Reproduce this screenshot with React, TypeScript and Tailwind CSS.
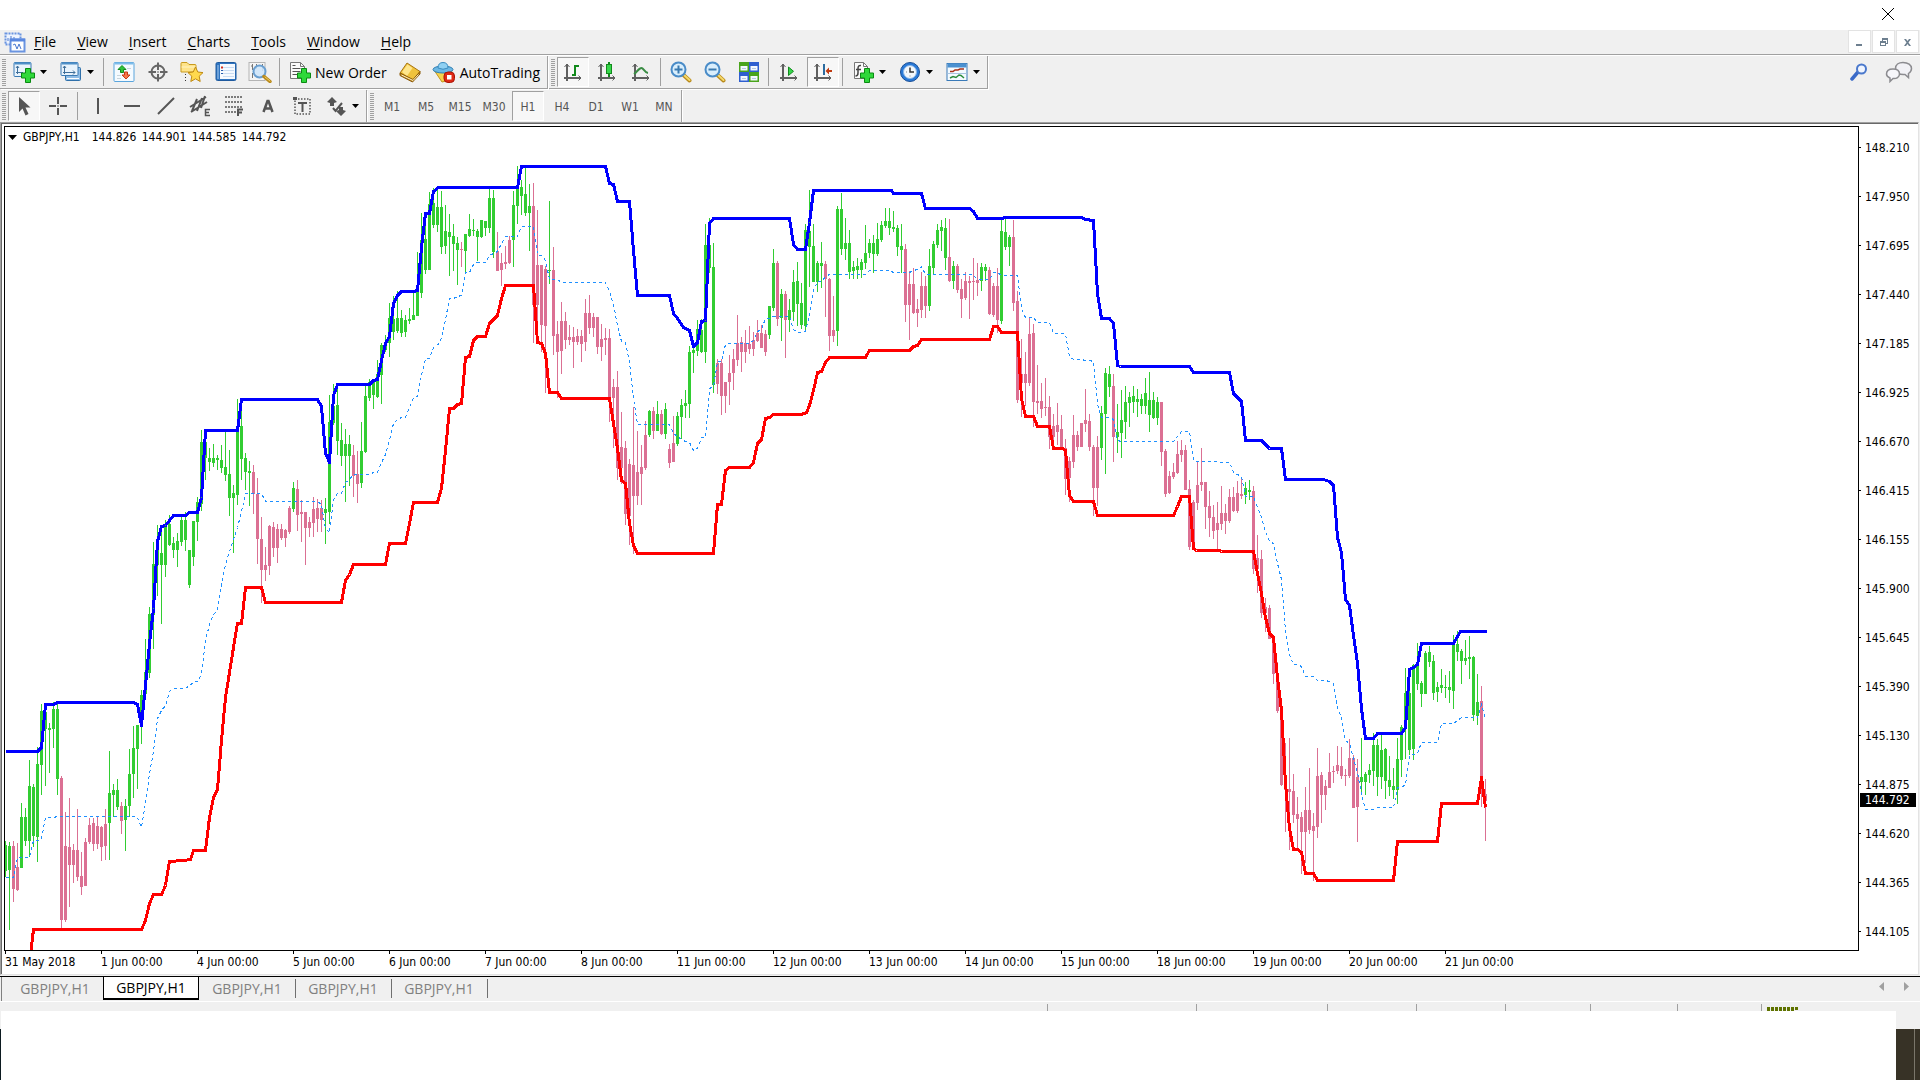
import React, { FC, ReactNode, memo } from "react";

// candle = colour + high.bodyTop.bodyBottom.low, one every 4px
const CANDLES = `
g841.845.871.877 g842.846.870.930 p841.846.889.902 p843.867.890.891 g803.817.868.868 g808.817.841.846 g760.786.841.857 g784.787.836.847
g747.764.837.862 g704.711.765.795 g705.712.729.786 g723.728.730.773 g702.709.729.748 g703.709.779.795 p776.778.920.928 p812.846.920.922
p798.847.865.907 p844.850.865.883 p809.850.877.881 p852.876.887.895 p838.842.886.886 p818.825.842.844 p818.823.844.851 p817.826.844.849
p826.827.847.861 p809.824.846.860 g751.793.823.860 g784.790.795.817 g779.790.807.810 p802.806.821.834 g799.806.820.851 g749.774.806.817
g726.748.774.798 g725.725.749.789 g690.695.725.744 g639.672.694.694 g607.614.673.678 g542.564.615.649 g525.541.565.596 g525.553.565.624
g520.525.565.577 g515.524.545.546 g537.543.550.558 g533.541.550.567 g516.520.542.546 g512.520.540.551 g550.550.585.588 g521.521.557.566
g497.502.522.541 g430.442.504.511 g432.442.458.480 g448.458.462.471 g444.458.463.467 g455.458.460.470 g445.460.468.473 g431.467.475.481
g450.474.498.516 g485.493.498.553 g399.430.495.505 g399.426.459.480 g453.458.472.490 g461.471.473.506 p465.472.494.514 p478.494.539.564
p517.539.570.603 p547.565.570.581 p525.526.566.575 p522.527.548.557 p524.529.548.563 p524.529.538.540 p529.530.538.547 p506.508.532.534
g482.488.509.512 p480.489.515.531 p500.512.514.542 p512.512.528.565 p517.522.528.537 p497.509.523.537 p499.508.519.532 p500.508.520.532
g498.509.513.544 g395.422.512.524 g384.406.423.425 g384.405.441.455 g423.440.456.466 g429.444.456.502 g435.444.456.486 p445.455.476.497
p451.474.484.503 g422.451.483.488 g384.396.452.453 g379.382.398.401 g380.382.395.409 g360.374.397.398 g343.345.375.404 g335.342.350.352
g303.318.343.357 g296.319.332.340 g291.318.331.333 g310.318.333.337 g315.320.332.337 g308.319.321.324 g291.315.320.320 g252.292.316.316
g213.240.293.298 g212.239.270.274 g192.204.270.270 g188.203.225.228 g188.207.225.232 g191.207.247.254 g205.231.246.254 g214.232.237.276
g224.236.244.271 g237.243.250.285 p242.249.250.267 g234.234.251.272 g214.229.236.237 g219.230.231.236 g229.231.237.261 g220.220.237.238
g221.221.228.236 g188.198.228.233 g190.198.252.258 p232.251.271.271 p253.263.270.286 p246.262.264.269 p236.240.263.264 g191.205.240.267
g166.187.206.224 g180.187.196.215 g167.194.213.216 g184.206.213.251 p183.206.305.343 p210.265.305.343 p265.265.325.352 p266.269.326.393
g201.270.271.284 p247.270.336.355 p321.334.352.398 p302.321.351.374 p312.321.340.349 p325.337.340.345 p327.337.342.368 p329.336.342.345
p330.336.344.362 p299.313.342.351 p295.313.328.334 p313.317.328.337 p317.317.347.354 p324.339.347.361 p328.338.340.355 p329.338.398.422
p379.387.398.448 p371.387.468.480 p412.447.468.484 p441.448.514.525 p459.464.516.545 p407.465.496.554 p431.472.496.505 p445.467.474.505
p421.435.468.470 g410.411.435.437 p407.411.431.439 g401.414.431.431 p410.414.434.435 g403.409.434.439 p444.449.463.468 p416.443.462.462
g412.416.444.446 g399.405.417.439 g390.403.406.418 g346.352.404.418 g347.350.353.373 g320.329.351.356 g319.330.352.353 g224.245.352.363
g218.245.268.273 g243.267.385.393 p359.363.384.394 p359.363.396.415 p382.382.396.413 p355.373.382.405 p349.359.373.390 p315.343.360.366
p337.342.352.372 p330.343.352.363 p326.344.349.354 p332.340.349.356 p320.333.341.342 p325.333.348.348 p330.334.352.356 g306.306.335.339
g249.263.308.311 p261.263.319.326 g289.294.318.341 p291.294.320.358 g299.310.320.332 g270.282.312.321 g262.281.304.326 g283.303.325.329
g224.230.326.332 g190.231.247.287 g224.246.282.282 g261.263.282.292 g242.263.266.288 p261.264.279.317 p278.279.336.351 p296.330.336.342
g206.209.331.346 g193.209.249.255 g218.243.249.260 g230.243.272.279 g261.267.271.279 g258.266.270.279 g259.262.270.278 g225.253.263.269
g239.243.253.258 g235.243.254.273 g223.239.254.256 g221.225.240.242 g208.221.226.228 g208.221.228.235 g211.227.229.232 g225.228.247.256
g224.246.250.273 p244.249.305.322 p271.284.305.340 p268.284.313.314 p299.309.313.327 p272.286.310.318 p276.286.306.318 g249.266.306.311
g241.244.268.275 g224.230.245.248 g220.227.231.251 g218.228.258.270 p219.257.281.282 g261.266.281.289 p264.266.290.293 p279.289.299.318
p272.281.298.300 p276.281.283.319 p258.281.282.300 p263.280.283.296 g263.267.281.291 g264.267.271.281 p267.270.314.315 p283.286.315.317
p268.286.320.333 g218.231.321.324 g219.232.247.250 g235.237.247.266 p220.237.303.311 p291.301.400.403 p339.374.383.417 p352.374.383.406
p318.334.383.386 p324.333.402.427 p365.401.403.414 p383.401.409.418 p378.407.408.416 p396.407.437.449 p414.426.437.448 p403.425.432.445
p415.429.448.450 p439.448.479.495 p457.461.478.502 p415.435.462.468 p431.435.447.451 p423.423.447.447 p389.420.424.432 p414.421.447.451
p445.447.488.516 p436.447.488.506 g406.413.448.460 g368.373.414.474 g366.374.387.397 p374.386.437.462 g404.432.437.453 g390.420.433.458
g386.402.422.439 g392.397.403.427 g386.396.402.413 g389.399.402.417 g394.399.406.414 g378.393.406.414 g372.400.415.432 g392.400.418.419
g397.402.418.425 p402.402.452.466 p449.451.494.497 p471.476.493.494 p463.472.477.479 p441.454.473.474 p440.450.455.462 p445.450.490.490
p480.489.547.550 p500.502.547.548 p461.485.503.510 p448.482.485.491 p482.482.507.529 p491.506.518.537 p505.517.531.539 p502.523.530.550
p486.513.524.530 p504.513.521.534 p489.497.521.523 p487.497.511.512 p481.493.511.513 p479.494.496.499 g482.488.495.504 g480.490.492.500
p486.491.569.574 p535.558.569.593 p550.559.613.618 p598.607.613.632 p605.608.639.639 p637.637.674.684 p662.673.711.713 p708.710.785.786
p743.785.790.832 p738.789.792.850 p774.791.815.823 p797.814.819.851 p812.817.832.874 p787.810.832.863 p768.810.830.834 p813.826.831.881
p748.776.827.838 p772.775.795.823 p780.786.795.810 p753.772.788.788 p766.771.772.783 p746.765.771.774 p747.766.776.779 p769.775.776.786
p739.758.776.778 p755.758.808.808 p759.777.807.842 g738.777.782.793 g772.774.782.795 g764.770.775.783 g733.745.771.786 g739.745.777.796
g734.750.777.789 g748.749.781.799 g756.780.787.796 g768.786.790.799 g738.759.790.804 g725.727.760.777 g668.693.728.759 g669.693.750.755
g664.665.749.760 g643.664.684.690 g681.683.694.707 g651.653.694.694 g646.652.662.667 g655.661.693.700 g682.687.692.702 g669.685.688.693
g675.687.688.698 g671.687.690.703 g635.645.691.709 g631.644.652.661 g649.651.661.684 g640.658.661.665 g636.657.659.679 g656.657.715.721
g674.702.716.725 p686.701.777.807 p779.794.801.841`
  .trim()
  .split(/\s+/)
  .map((c) => ({ up: c[0] === "g", v: c.slice(1).split(".").map(Number) }));

const UPPER =
  "5,751 37,751 41,747 45,704 53,704 57,702 133,702 137,704 141,725 145,685 149,643 153,608 157,541 161,526 165,525 173,515 185,515 189,512 197,512 201,497 205,430 237,430 241,399 317,399 321,406 325,453 329,462 333,395 337,384 369,384 373,380 377,379 381,360 385,343 389,336 393,303 397,295 401,291 413,291 417,290 421,247 425,213 429,213 433,191 438,187 517,187 521,166 605,166 609,183 613,184 617,201 629,201 633,250 637,295 669,295 673,313 677,318 683,327 689,330 693,346 697,342 701,321 705,320 709,223 713,218 789,218 793,244 797,249 805,249 809,222 813,190 891,190 893,193 921,193 925,208 969,208 973,211 977,218 1001,218 1005,217 1081,217 1085,219 1093,220 1097,293 1101,318 1109,318 1113,323 1117,365 1120,366 1189,366 1193,372 1229,372 1233,393 1241,401 1245,440 1261,440 1269,448 1281,448 1285,479 1323,479 1329,481 1333,485 1337,537 1341,552 1345,599 1349,605 1353,635 1357,663 1361,708 1365,738 1373,738 1377,733 1401,733 1405,727 1409,669 1413,667 1417,664 1421,643 1453,643 1457,636 1460,631 1486,631";
const LOWER =
  "5,1003 13,1003 17,963 29,963 33,929 141,929 145,920 149,903 153,894 161,894 165,885 169,861 183,860 190,859 193,850 205,850 209,817 213,797 217,789 221,740 225,697 229,672 233,647 237,623 241,623 245,587 261,587 265,602 341,602 345,580 349,574 353,564 385,564 389,543 405,543 409,523 413,502 437,502 441,488 445,450 449,408 453,408 457,404 461,403 465,357 469,356 473,340 477,336 485,336 489,323 493,319 497,315 501,298 505,285 533,285 537,342 541,343 545,353 549,392 557,392 561,398 609,398 613,423 617,448 621,480 625,483 629,523 633,545 637,553 713,553 717,504 721,504 725,470 729,467 749,467 753,462 757,443 761,439 765,418 769,417 773,414 801,414 806,412 809,405 813,390 817,372 821,371 825,362 829,357 865,357 869,350 909,350 913,346 917,345 921,339 989,339 993,326 997,326 1001,332 1017,332 1021,398 1025,416 1033,416 1037,426 1049,426 1053,448 1062,448 1065,450 1069,495 1073,501 1093,501 1097,515 1173,515 1177,506 1181,496 1189,496 1193,548 1196,550 1219,550 1221,551 1253,551 1257,573 1261,593 1265,617 1269,633 1273,637 1277,677 1281,710 1285,783 1289,828 1293,849 1297,849 1301,852 1305,873 1313,873 1317,880 1393,880 1397,841 1437,841 1441,803 1477,803 1481,777 1485,807";

const toPoints = (s: string) => s.split(" ").map((p) => p.split(",").map(Number));
const upperPoints = toPoints(UPPER);
const lowerPoints = toPoints(LOWER);

const valueAt = (points: number[][], x: number) => {
  const n = points.findIndex((p) => p[0] >= x);
  if (n <= 0) return points[n === 0 ? 0 : points.length - 1][1];
  const [x0, y0] = points[n - 1];
  const [x1, y1] = points[n];
  return y0 + ((y1 - y0) * (x - x0)) / (x1 - x0);
};

// the middle line is the average of both bands
const MIDDLE = CANDLES.map((_, i) => {
  const x = 5 + i * 4;
  return `${x},${Math.round((valueAt(upperPoints, x) + valueAt(lowerPoints, x)) / 2)}`;
}).join(" ");

const PRICES = [
  "148.210", "147.950", "147.695", "147.440", "147.185", "146.925", "146.670", "146.415", "146.155",
  "145.900", "145.645", "145.390", "145.130", "144.875", "144.620", "144.365", "144.105",
];
const DATES = [
  "31 May 2018", "1 Jun 00:00", "4 Jun 00:00", "5 Jun 00:00", "6 Jun 00:00", "7 Jun 00:00", "8 Jun 00:00", "11 Jun 00:00",
  "12 Jun 00:00", "13 Jun 00:00", "14 Jun 00:00", "15 Jun 00:00", "18 Jun 00:00", "19 Jun 00:00", "20 Jun 00:00", "21 Jun 00:00",
];
const OHLC = ["144.826", "144.901", "144.585", "144.792"];
const MENUS = ["File", "View", "Insert", "Charts", "Tools", "Window", "Help"];
const TIMEFRAMES = ["M1", "M5", "M15", "M30", "H1", "H4", "D1", "W1", "MN"];

/* ---------- icons ---------- */
const Svg: FC<{ children: ReactNode; w?: number; h?: number }> = ({ children, w = 22, h = 22 }) => (
  <svg width={w} height={h} viewBox={`0 0 ${w} ${h}`} fill="none" className="shrink-0" aria-hidden="true">
    {children}
  </svg>
);

const Plus: FC = () => (
  <path d="M12.5 7.5h5v4.5h4v5h-4v4.5h-5V17h-4v-5h4z" fill="#2fd83a" stroke="#0a8a12" />
);

const NewChartIcon = () => (
  <Svg>
    <rect x="1" y="1.5" width="17" height="14" rx="1" fill="#e8f3fc" stroke="#3a7ab4" />
    <path d="M1.5 2.5h16" stroke="#4f90c8" strokeWidth="2" />
    <path d="M4.5 5v8M3 7l1.5-2L6 7M3 11.5h7" stroke="#3f6f9a" />
    <Plus />
  </Svg>
);
const ProfilesIcon = () => (
  <Svg>
    <rect x="5.5" y="6.5" width="15" height="13" rx="1" fill="#8fbde6" stroke="#2f70aa" />
    <path d="M7 17.5h12" stroke="#fff" />
    <rect x="1" y="1.5" width="17" height="13" rx="1" fill="#e8f3fc" stroke="#3a7ab4" />
    <path d="M1.5 2.5h16" stroke="#4f90c8" strokeWidth="2" />
    <path d="M4.5 5v8M3 7l1.5-2L6 7M3 11.5h12M13 9.5l2 2-2 2" stroke="#3f6f9a" />
  </Svg>
);
const MarketIcon = () => (
  <Svg>
    <rect x="1" y="1.5" width="20" height="19" rx="1" fill="#f4faff" stroke="#5ba5dc" />
    <path d="M1.5 2.5h19" stroke="#7dbcea" strokeWidth="2" />
    <path d="M4 14.5h4M14 7.5h4M4 17.5h4" stroke="#c8d4dc" />
    <path d="M9 4.5l4 4h-2.5v3h-3v-3H5z" fill="#2fc43a" stroke="#128a1c" />
    <path d="M13 18l4-4h-2.5v-3h-3v3H9z" fill="#f5764a" stroke="#c43a12" />
  </Svg>
);
const TargetIcon = () => (
  <Svg>
    <circle cx="11" cy="11" r="6.5" stroke="#666" strokeWidth="2" />
    <path d="M11 1.5V9M11 13v7.5M1.5 11H9M13 11h7.5" stroke="#666" strokeWidth="2" />
    <path d="M10 11h2" stroke="#666" />
  </Svg>
);
const FolderStarIcon = () => (
  <Svg w={24}>
    <path d="M1 2.5q0-1 1-1h5l2 2h6q1 0 1 1V11H1z" fill="#ffe48a" stroke="#c89a1e" />
    <path d="M1.5 6h14" stroke="#fff4c4" />
    <path d="M5.5 13v8" stroke="#333" strokeDasharray="1 2" />
    <path d="M15.5 6l2.300 5 5.200.6-3.800 3.600 1 5.300-4.700-2.700-4.700 2.700 1-5.300L8 11.600l5.200-.6z" fill="#ffd94d" stroke="#c08a12" />
  </Svg>
);
const NotebookIcon = () => (
  <Svg>
    <rect x="1" y="1.5" width="20" height="18" rx="1.5" fill="#2f74c0" stroke="#1f5a9e" />
    <rect x="5" y="3" width="15" height="15" fill="#f6faff" />
    <path d="M3 4v14" stroke="#a9ccf0" />
    <path d="M8 6.5h11M8 9.5h11M8 12.5h11M8 15.5h11" stroke="#c9dcf2" />
    <path d="M6 6.5h2" stroke="#d03020" strokeWidth="2" />
    <path d="M6 9.5h2M6 12.5h2" stroke="#2a5fae" />
  </Svg>
);
const TesterIcon = () => (
  <Svg w={24}>
    <rect x="1" y="1.5" width="16" height="18" fill="#f5f5f5" stroke="#b4b4b4" />
    <path d="M4.5 3v6M3 5h2M8.5 3v5M14.5 3v7M13 5h2M4.5 12v5" stroke="#777" />
    <circle cx="11.5" cy="10.5" r="6" fill="#cfe6fa" fillOpacity=".9" stroke="#6a9fd0" strokeWidth="2" />
    <path d="M16 15.500l6 5" stroke="#b98a1c" strokeWidth="3.5" strokeLinecap="round" />
    <path d="M17 16l5 4" stroke="#f2cf62" strokeLinecap="round" />
  </Svg>
);
const NewOrderIcon = () => (
  <Svg>
    <path d="M1.5 1.5h10l4 4v12h-14z" fill="#fafafa" stroke="#777" />
    <path d="M11.5 1.5v4h4" stroke="#777" />
    <path d="M3.5 4.5h3M3.5 7.5h8M3.5 10.5h8M3.5 13.5h5" stroke="#555" />
    <Plus />
  </Svg>
);
const BookIcon = () => (
  <Svg>
    <path d="M1 12L8 2l13 8.500-6.500 9z" fill="#f0c23c" stroke="#a87512" />
    <path d="M3 11l5.500-7.500 5 3.500L8 15z" fill="#ffe68c" />
    <path d="M1 12v2.500l12.500 6.500 7.500-8v-2.500L14 18.500z" fill="#b87f16" stroke="#8c5c0c" />
    <path d="M2.500 14l11.500 5.500 5.500-6" stroke="#fff0c0" />
  </Svg>
);
const ExpertIcon = () => (
  <Svg w={24}>
    <path d="M2 9l8 12 8-2 2-10z" fill="#f6d34c" stroke="#c4951c" />
    <ellipse cx="11" cy="8.5" rx="10" ry="3.5" fill="#6db8e4" stroke="#2f7fb4" />
    <path d="M6 7q0-5.500 5-5.500T16 7q-5 2.500-10 0z" fill="#8fd0f2" stroke="#3a8cc0" />
    <rect x="12" y="11" width="10.5" height="10.5" rx="4" fill="#e02814" stroke="#a81408" />
    <rect x="15" y="14" width="4.5" height="4.5" fill="#fff" />
  </Svg>
);

// bottom-left axes shared by all chart mode buttons
const Axes: FC<{ children: ReactNode }> = ({ children }) => (
  <Svg>
    <path d="M5 3v17M2 17h17" stroke="#606060" strokeWidth="2" />
    <path d="M2.5 6L5 3l2.5 3M16.500 14.500L19 17l-2.500 2.500" stroke="#606060" />
    {children}
  </Svg>
);
const BarsIcon = () => (
  <Axes>
    <path d="M13 4v11M13 5h4M10 14h3" stroke="#128a1c" strokeWidth="2" />
  </Axes>
);
const CandlesIcon = () => (
  <Axes>
    <path d="M13 1v15" stroke="#128a1c" strokeWidth="2" />
    <rect x="10.5" y="3.5" width="5" height="9" fill="#35d64a" stroke="#128a1c" />
  </Axes>
);
const LineIcon = () => (
  <Axes>
    <path d="M4 13c3-2 5-6 7.500-6 2 0 3 4.500 6.500 5" stroke="#3a8c44" strokeWidth="2" />
  </Axes>
);
const AutoScrollIcon = () => (
  <Axes>
    <path d="M10.5 6v8.500l5-4.200z" fill="#35d64a" stroke="#128a1c" />
  </Axes>
);
const ShiftIcon = () => (
  <Axes>
    <path d="M12 3v11" stroke="#2c6ca0" strokeWidth="2" />
    <path d="M16 10h4" stroke="#c03a10" strokeWidth="2" />
    <path d="M17 6.500L13.500 10l3.500 3.500z" fill="#c03a10" />
  </Axes>
);
const ZoomIcon: FC<{ plus?: boolean }> = ({ plus }) => (
  <Svg>
    <path d="M13.5 14l6 5.500" stroke="#b98a1c" strokeWidth="4" strokeLinecap="round" />
    <path d="M14.5 14.500l5 4.500" stroke="#f5d96a" strokeWidth="2" strokeLinecap="round" />
    <circle cx="8.5" cy="8.5" r="7" fill="#d9eefc" stroke="#4a8cc8" strokeWidth="2" />
    <path d={plus ? "M4.5 8.500h8M8.500 4.500v8" : "M4.5 8.500h8"} stroke="#3a7ab0" strokeWidth="2" />
  </Svg>
);
const TilesIcon = () => (
  <Svg>
    <path d="M1 1h10v10H1zM11 11h10v10H11z" fill="#4aa41c" />
    <path d="M11 1h10v10H11zM1 11h10v10H1z" fill="#2f5fd0" />
    <path d="M2.500 5h7v4.500h-7zM12.500 5h7v4.500h-7zM2.500 15h7v4.500h-7zM12.500 15h7v4.500h-7z" fill="#f4f8ff" />
    <path d="M4 7.500h4M14 7.500h4M4 17.500h4M14 17.500h4" stroke="#b4c8e0" />
  </Svg>
);
const IndicatorIcon = () => (
  <Svg>
    <path d="M2.5 1.5h9l4 4v12h-13z" fill="#fafafa" stroke="#777" />
    <path d="M11.5 1.5v4h4" stroke="#777" />
    <path d="M9 4.500q-3-.5-3 3V12q0 3-2.500 3M4 8.500h5" stroke="#444" strokeWidth="1.5" />
    <Plus />
  </Svg>
);
const ClockIcon = () => (
  <Svg>
    <circle cx="11" cy="11" r="9.5" fill="#2a7ad8" stroke="#1a4f96" />
    <circle cx="11" cy="11" r="6.5" fill="#f4f8fc" stroke="#8db8e8" />
    <path d="M11 6.500V11h4" stroke="#333" strokeWidth="1.5" />
    <path d="M7 11h1M11 14.500v1" stroke="#888" />
  </Svg>
);
const TemplateIcon = () => (
  <Svg>
    <rect x="1" y="2.5" width="20" height="17" fill="#f4faff" stroke="#3a7ab8" />
    <path d="M1.5 4.500h19" stroke="#4a90d0" strokeWidth="4" />
    <path d="M4 10.500h3l2-1.500h3l2-1h4" stroke="#a83018" strokeWidth="1.5" />
    <path d="M1.5 12.500h19" stroke="#a8c4e0" />
    <path d="M4 17l3-1.500 3 1 3-2.500 2 .5 3 2.500" stroke="#2c8c3c" strokeWidth="1.5" />
  </Svg>
);

const G = "#555";
const drawingTools: { name: string; icon: ReactNode }[] = [
  { name: "Vertical line", icon: <path d="M11 3v16" stroke={G} strokeWidth="2" /> },
  { name: "Horizontal line", icon: <path d="M3 11h16" stroke={G} strokeWidth="2" /> },
  { name: "Trendline", icon: <path d="M3 19L19 3" stroke={G} strokeWidth="2" /> },
  {
    name: "Equidistant channel",
    icon: (
      <>
        <path d="M1 12L17 2M2 17L18 7M3 16l5-12M8 16l5-13M12 13l4-12" stroke={G} strokeWidth="2" />
        <path d="M21 14.500h-4.500v6H21M16.500 17.500H20" stroke={G} strokeWidth="1.5" />
      </>
    ),
  },
  {
    name: "Fibonacci retracement",
    icon: (
      <>
        <path d="M2 2h17M2 7h17M2 12h17M2 17h11" stroke={G} strokeWidth="1.5" strokeDasharray="2 1" />
        <path d="M15 21v-6.500h5M15 17.500h4" stroke={G} strokeWidth="2" />
      </>
    ),
  },
  { name: "Text", icon: <path d="M6.500 17L10.500 6h1l4 11M8 13.500h6" stroke={G} strokeWidth="2.5" /> },
  {
    name: "Text label",
    icon: (
      <>
        <rect x="4" y="4" width="15" height="15" stroke={G} strokeWidth="1.5" strokeDasharray="1.5 1.5" />
        <path d="M2 2h4v3H2z" fill={G} />
        <path d="M7 8h9M11.500 8v9" stroke={G} strokeWidth="2" />
      </>
    ),
  },
];

/* ---------- toolbar parts ---------- */
const Grip = () => (
  <div className="mt-[3px] mr-px ml-[2px] h-[27px] w-[4px] bg-[repeating-linear-gradient(to_bottom,#a0a0a0_0_1px,#f0f0f0_1px_2px)]" />
);
const Separator = () => <div className="mt-[2px] mr-[3px] ml-[2px] h-[28px] w-px bg-[#a0a0a0]" />;

const ToolButton: FC<{ label: string; active?: boolean; children: ReactNode }> = ({ label, active, children }) => (
  <button
    type="button"
    aria-label={label}
    aria-pressed={active}
    className={`mx-px mt-px flex h-[30px] w-[32px] items-center justify-center border ${
      active ? "border-t-[#a0a0a0] border-r-white border-b-white border-l-[#a0a0a0] bg-[#f7f7f7]" : "border-transparent"
    }`}
  >
    {children}
  </button>
);
const DropButton: FC<{ label: string; children: ReactNode }> = ({ label, children }) => (
  <button type="button" aria-label={label} aria-haspopup="menu" className="flex w-[47px] items-center gap-[5px] pl-[6px]">
    {children}
    <svg width="7" height="4" viewBox="0 0 7 4" className="shrink-0" aria-hidden="true">
      <path d="M0 0h7L3.500 4z" fill="#000" />
    </svg>
  </button>
);
const Band: FC<{ children: ReactNode }> = ({ children }) => (
  <div className="mr-px flex h-[33px] shrink-0 border-r border-b border-[#a0a0a0] shadow-[1px_1px_0_#fff]">{children}</div>
);

const CandleChart = memo(() => (
  <svg className="block h-full w-full" role="img" aria-label="GBPJPY H1 chart">
    <g transform="translate(-5 -127)" shapeRendering="crispEdges">
      {CANDLES.map(({ up, v: [high, top, bottom, low] }, i) => (
        <g key={i} fill={up ? "#32cd32" : "#db7093"}>
          <rect x={5 + i * 4} y={high} width="1" height={low - high} />
          <rect x={4 + i * 4} y={top} width="3" height={bottom - top} />
        </g>
      ))}
      <g transform="translate(.5 .5)" fill="none">
        <polyline points={MIDDLE} stroke="#1e90ff" strokeDasharray="3 3" />
        <polyline points={UPPER} stroke="#00f" strokeWidth="3" strokeLinejoin="round" />
        <polyline points={LOWER} stroke="#f00" strokeWidth="3" strokeLinejoin="round" />
      </g>
    </g>
  </svg>
));

const App: FC = () => {
  return (
    <div className="flex min-h-screen flex-col overflow-hidden bg-[#f0f0f0] font-['Open_Sans','Noto_Sans',sans-serif] text-[14px] text-black">
      {/* title bar */}
      <div className="flex h-[30px] justify-end bg-white pt-[7px] pr-[25px]">
        <button type="button" aria-label="Close" className="h-[14px] w-[14px]">
          <svg width="14" height="14" viewBox="0 0 14 14" aria-hidden="true">
            <path d="M1 1l12 12M13 1L1 13" stroke="#000" />
          </svg>
        </button>
      </div>

      {/* menu */}
      <div className="flex h-[25px] items-start border-b border-[#a0a0a0]">
        <div className="flex h-[24px] items-center pl-[4px]">
          <Svg>
            <rect x="1.500" y="2.500" width="15" height="11" fill="#eef4ff" stroke="#6a94e0" strokeWidth="2" strokeDasharray="2 1" />
            <path d="M4 7v3M7 5v4M10 6v3" stroke="#4a78d0" />
            <rect x="6.500" y="8.500" width="14" height="12" fill="#fff" stroke="#6a94e0" strokeWidth="2" />
            <path d="M6 9h15" stroke="#5a88e0" strokeWidth="3" />
            <path d="M9 14l2-1 2 5 2-5 2 5" stroke="#4a78d0" />
          </Svg>
        </div>
        <nav className="flex h-[24px] flex-1 items-center gap-px">
          {MENUS.map((name) => (
            <button key={name} type="button" className="px-[10px] leading-[20px] first:pl-[8px]">
              <span className="underline underline-offset-2">{name[0]}</span>
              {name.slice(1)}
            </button>
          ))}
        </nav>
        <div className="flex gap-px pr-px">
          {[
            { name: "Minimize", d: "M8 14h6v2H8z" },
            { name: "Restore", d: "M10 8h6v6h-2v-1h1v-3h-4v1h-1zM8 11h6v5H8zM9 13v2h4v-2z" },
            { name: "Close chart", d: "M8 9h2l1.500 2L13 9h2l-2.500 3.500L15 16h-2l-1.500-2-1.500 2H8l2.500-3.500z" },
          ].map(({ name, d }) => (
            <button key={name} type="button" aria-label={name} className="h-[23px] w-[23px] border border-[#e3e3e3] bg-white">
              <svg width="21" height="21" viewBox="1 1 21 21" aria-hidden="true">
                <path d={d} fill="#6d7f8f" fillRule="evenodd" />
              </svg>
            </button>
          ))}
        </div>
      </div>

      {/* standard toolbar */}
      <div className="flex h-[35px] items-start border-t border-white">
        <Band>
          <Grip />
          <DropButton label="New chart"><NewChartIcon /></DropButton>
          <DropButton label="Profiles"><ProfilesIcon /></DropButton>
          <Separator />
          <ToolButton label="Market Watch"><MarketIcon /></ToolButton>
          <ToolButton label="Data Window"><TargetIcon /></ToolButton>
          <ToolButton label="Navigator"><FolderStarIcon /></ToolButton>
          <ToolButton label="Terminal"><NotebookIcon /></ToolButton>
          <ToolButton label="Strategy Tester"><TesterIcon /></ToolButton>
          <Separator />
          <button type="button" className="flex items-center gap-[4px] px-[6px] whitespace-nowrap">
            <NewOrderIcon />
            New Order
          </button>
          <ToolButton label="MetaEditor"><BookIcon /></ToolButton>
          <button type="button" className="flex items-center gap-[4px] pr-[7px] pl-[5px] whitespace-nowrap">
            <ExpertIcon />
            AutoTrading
          </button>
        </Band>
        <Band>
          <Grip />
          <ToolButton label="Bar chart" active><BarsIcon /></ToolButton>
          <ToolButton label="Candlesticks"><CandlesIcon /></ToolButton>
          <ToolButton label="Line chart"><LineIcon /></ToolButton>
          <Separator />
          <ToolButton label="Zoom in"><ZoomIcon plus /></ToolButton>
          <ToolButton label="Zoom out"><ZoomIcon /></ToolButton>
          <ToolButton label="Tile windows"><TilesIcon /></ToolButton>
          <Separator />
          <ToolButton label="Auto scroll"><AutoScrollIcon /></ToolButton>
          <ToolButton label="Chart shift" active><ShiftIcon /></ToolButton>
          <Separator />
          <DropButton label="Indicators"><IndicatorIcon /></DropButton>
          <DropButton label="Periods"><ClockIcon /></DropButton>
          <DropButton label="Templates"><TemplateIcon /></DropButton>
        </Band>
        <div className="ml-auto flex items-center gap-[17px] pt-[5px] pr-[7px]">
          <button type="button" aria-label="Search">
            <Svg w={18} h={20}>
              <path d="M8 10l-6 7" stroke="#3a6ac8" strokeWidth="3.5" strokeLinecap="round" />
              <circle cx="11.5" cy="7" r="4.5" fill="#f0f5ff" stroke="#4a78cc" strokeWidth="2" />
            </Svg>
          </button>
          <button type="button" aria-label="Chat">
            <Svg w={28}>
              <path d="M18 1.500c5 0 8.500 2.500 8.500 6 0 2.500-1.500 4-3 5v4l-3.500-3c-6 .5-9.500-2-9.500-6 0-3.500 3-6 7.500-6z" fill="#f2f2f6" stroke="#8c8c90" strokeWidth="1.5" />
              <path d="M8 8c4 0 6.500 2 6.500 5s-3 5-6.500 4.500L5 20.500V17c-2.500-1-3.500-2-3.500-4C1.500 10 4 8 8 8z" fill="#f6f6fa" stroke="#8c8c90" strokeWidth="1.5" />
            </Svg>
          </button>
        </div>
      </div>

      {/* line studies + timeframes */}
      <div className="flex h-[32px] items-start overflow-hidden">
        <Band>
          <Grip />
          <ToolButton label="Cursor" active>
            <Svg>
              <path d="M6 2v15l3.500-3.500 3 7 3-1.500-3-6.500h5z" fill={G} />
            </Svg>
          </ToolButton>
          <ToolButton label="Crosshair">
            <Svg>
              <path d="M11 2v7M11 13v7M2 11h7M13 11h7M10.500 11h1" stroke={G} strokeWidth="2" />
            </Svg>
          </ToolButton>
          <Separator />
          {drawingTools.map(({ name, icon }) => (
            <ToolButton key={name} label={name}>
              <Svg>{icon}</Svg>
            </ToolButton>
          ))}
          <DropButton label="Arrows">
            <Svg>
              <path d="M7 2l5 5-3 1v3H5V8L2 7zM16 21l-5-5 3-1v-3h4v3l3 1z" fill={G} />
              <path d="M8 13l2.500 3L17 8" stroke={G} strokeWidth="2" />
            </Svg>
          </DropButton>
        </Band>
        <Band>
          <Grip />
          {TIMEFRAMES.map((tf) => (
            <ToolButton key={tf} label={tf} active={tf === "H1"}>
              <span className="pt-[2px] font-['DejaVu_Sans_Condensed','DejaVu_Sans',sans-serif] text-[12px] text-[#555]">{tf}</span>
            </ToolButton>
          ))}
        </Band>
      </div>

      {/* chart window */}
      <main className="mr-px border border-t-[#a0a0a0] border-r-[#e3e3e3] border-b-[#e3e3e3] border-l-[#a0a0a0] font-['DejaVu_Sans_Condensed','DejaVu_Sans',sans-serif] text-[12px]">
        <div className="border-t border-l border-[#696969] bg-white pt-[2px] pl-[2px]">
          <div className="flex h-[825px]">
            <div className="relative min-w-0 flex-1 border border-black">
              <CandleChart />
              <div className="absolute top-[2px] left-[3px] flex items-center leading-[16px]">
                <svg width="9" height="5" viewBox="0 0 9 5" className="mr-[6px]" aria-hidden="true">
                  <path d="M0 0h9L4.500 5z" fill="#000" />
                </svg>
                <span className="mr-[12px]">GBPJPY,H1</span>
                {OHLC.map((value) => (
                  <span key={value} className="w-[50px]">
                    {value}
                  </span>
                ))}
              </div>
            </div>
            <div className="relative w-[59px]">
              {PRICES.map((price) => (
                <div key={price} className="flex h-[49px] items-start pt-[14px] leading-[16px]">
                  <span className="mt-[7px] mr-[4px] h-px w-[2px] bg-black" />
                  {price}
                </div>
              ))}
              <div className="absolute top-[667px] left-px w-[56px] bg-black pl-[5px] leading-[14px] text-white">144.792</div>
            </div>
          </div>
          <div className="flex h-[23px] pl-px">
            {DATES.map((date) => (
              <div key={date} className="w-[96px] shrink-0 leading-[16px] whitespace-nowrap">
                <div className="h-[3px] w-px bg-black" />
                {date}
              </div>
            ))}
          </div>
        </div>
      </main>

      {/* chart tabs */}
      <div className="mt-px flex h-[25px] items-start border-t border-black pl-px">
        <div className="flex border-l border-[#808080] pl-[5px] text-[#808080]">
          {[0, 1, 2, 3, 4].map((i) => (
            <div key={i} className="flex h-[24px] w-[96px] items-start">
              <button
                type="button"
                className={
                  i === 1
                    ? "-mt-px h-[24px] w-full border border-b-2 border-black bg-white text-black"
                    : "h-[23px] w-full"
                }
              >
                GBPJPY,H1
              </button>
              {i > 1 && <span className="mt-[2px] -mr-px h-[19px] w-px shrink-0 bg-[#707070]" />}
            </div>
          ))}
        </div>
        <div className="ml-auto flex gap-[20px] pt-[5px] pr-[11px]">
          <button type="button" aria-label="Scroll tabs left" className="h-[9px] w-[5px]">
            <svg width="5" height="9" viewBox="0 0 5 9" aria-hidden="true">
              <path d="M5 0v9L0 4.500z" fill="#a0a0a0" />
            </svg>
          </button>
          <button type="button" aria-label="Scroll tabs right" className="h-[9px] w-[5px]">
            <svg width="5" height="9" viewBox="0 0 5 9" aria-hidden="true">
              <path d="M0 0v9l5-4.500z" fill="#a0a0a0" />
            </svg>
          </button>
        </div>
      </div>

      {/* status bar */}
      <div className="flex h-[10px] items-end justify-end border-t border-white pr-[122px]">
        {["w-[149px]", "w-[131px]", "w-[89px]", "w-[89px]", "w-[85px]", "w-[87px]", "w-[84px]"].map((w, i) => (
          <div key={i} className={`${w} h-[7px] border-l border-[#a0a0a0]`} />
        ))}
        <div className="flex h-[7px] w-[37px] items-end gap-px border-l border-[#a0a0a0] pl-[5px]">
          {[0, 1, 2, 3, 4, 5, 6].map((i) => (
            <span key={i} className="h-[4px] w-[3px] bg-[#5f7300]" />
          ))}
          <span className="mb-px h-[3px] w-[3px] bg-[#5f7300]" />
        </div>
      </div>
      <div className="flex min-h-[68px] flex-1">
        <div className="w-px bg-[linear-gradient(to_bottom,#f0f0f0_0_18px,#0c1a20_18px)]" />
        <div className="flex-1 bg-white" />
        <div className="flex w-[24px] flex-col">
          <div className="h-[18px]" />
          <div className="flex flex-1 justify-end bg-[#373226] pr-[5px]">
            <div className="w-px bg-[#7a766a]" />
          </div>
        </div>
      </div>
    </div>
  );
};

export default App;
